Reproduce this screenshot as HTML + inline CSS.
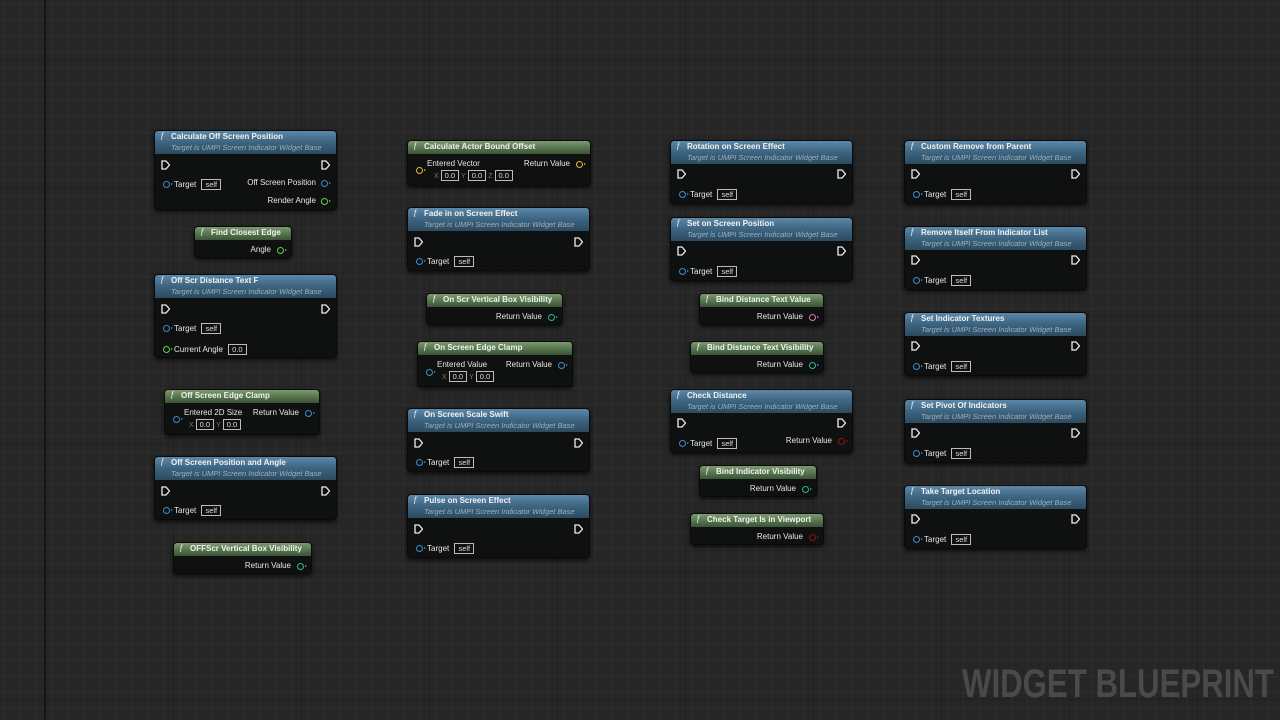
<!DOCTYPE html>
<html><head><meta charset="utf-8"><style>
*{margin:0;padding:0;box-sizing:border-box}
html,body{width:1280px;height:720px;overflow:hidden}
body{position:relative;font-family:"Liberation Sans",sans-serif;
background-color:#262626;
background-image:
linear-gradient(90deg,rgba(0,0,0,0) 0,rgba(0,0,0,0) 44px,#151515 44px,#151515 46px,rgba(0,0,0,0) 46px),
linear-gradient(90deg,rgba(255,255,255,.035) 1px,transparent 1px),
linear-gradient(0deg,rgba(255,255,255,.035) 1px,transparent 1px),
linear-gradient(90deg,rgba(0,0,0,.15) 1px,transparent 1px),
linear-gradient(0deg,rgba(0,0,0,.15) 1px,transparent 1px);
background-size:1280px 720px,16px 16px,16px 16px,128px 128px,128px 128px;
background-position:0 0,3px 5px,3px 5px,45px 0,0 60px}
.n{position:absolute;background:rgba(14,16,15,.95);border-radius:4px;box-shadow:0 2px 4px rgba(0,0,0,.7);border:1px solid #0a0a0a}
.h{position:absolute;left:0;right:0;top:0;border-radius:3px 3px 0 0;padding-left:6px}
.hb{height:23px;background:linear-gradient(180deg,#5c87a8 0%,#3c6480 50%,#2c4a5e 100%)}
.hg{height:13px;background:linear-gradient(180deg,#7d9a70 0%,#51704a 60%,#3c5436 100%)}
.t{position:absolute;top:1px;left:16px;font-size:8px;font-weight:bold;color:#f2f2f2;white-space:nowrap}
.f{position:absolute;top:0px;left:6px;font-size:8px;font-style:italic;font-family:"Liberation Serif",serif;color:#fff}
.s{position:absolute;top:12px;left:16px;font-size:7.5px;font-style:italic;color:#9ab0c0;white-space:nowrap}
.l{position:absolute;font-size:8px;color:#e6e6e6;white-space:nowrap}
.bx{display:inline-block;border:1px solid #bbb;padding:0 3px;font-size:7.5px;color:#ddd;line-height:9px;margin-left:3px}
.ax{color:#777;font-size:7px;margin:0 2px}
.p{position:absolute;width:7px;height:7px;border-radius:50%;border:1.6px solid #3a8fd0}
.p:after{content:"";position:absolute;right:-4px;top:1px;border-left:2px solid currentColor;border-top:1.2px solid transparent;border-bottom:1.2px solid transparent}
.ex{position:absolute;width:9px;height:10px}
.wm{position:absolute;left:962px;top:664px;font-size:40px;line-height:40px;font-weight:bold;color:#4a4a4a;white-space:nowrap;transform:scaleX(.78);transform-origin:left}
</style></head><body>
<svg width="0" height="0" style="position:absolute"><defs><path id="e" d="M1 1h4l3.5 4-3.5 4H1z" fill="none" stroke="#eee" stroke-width="1.3"/></defs></svg>

<!-- Column 1 -->
<div class="n" style="left:154px;top:130px;width:183px;height:80px">
<div class="h hb"><span class="f">f</span><span class="t">Calculate Off Screen Position</span><span class="s">Target is UMPI Screen Indicator Widget Base</span></div>
<svg class="ex" style="left:6px;top:29px"><use href="#e"/></svg><svg class="ex" style="left:166px;top:29px"><use href="#e"/></svg>
<span class="p" style="left:8px;top:50px;color:#3a8fd0"></span><span class="l" style="left:19px;top:48px">Target <span class="bx">self</span></span>
<span class="l" style="right:20px;top:47px">Off Screen Position</span><span class="p" style="left:166px;top:49px;color:#3a8fd0"></span>
<span class="l" style="right:20px;top:65px">Render Angle</span><span class="p" style="left:166px;top:67px;border-color:#5bd34a;color:#5bd34a"></span>
</div>
<div class="n" style="left:194px;top:226px;width:98px;height:32px">
<div class="h hg"><span class="f">f</span><span class="t">Find Closest Edge</span></div>
<span class="l" style="right:20px;top:18px">Angle</span><span class="p" style="left:82px;top:20px;border-color:#5bd34a;color:#5bd34a"></span>
</div>
<div class="n" style="left:154px;top:274px;width:183px;height:84px">
<div class="h hb"><span class="f">f</span><span class="t">Off Scr Distance Text F</span><span class="s">Target is UMPI Screen Indicator Widget Base</span></div>
<svg class="ex" style="left:6px;top:29px"><use href="#e"/></svg><svg class="ex" style="left:166px;top:29px"><use href="#e"/></svg>
<span class="p" style="left:8px;top:50px;color:#3a8fd0"></span><span class="l" style="left:19px;top:48px">Target <span class="bx">self</span></span>
<span class="p" style="left:8px;top:71px;border-color:#5bd34a;color:#5bd34a"></span><span class="l" style="left:19px;top:69px">Current Angle <span class="bx">0.0</span></span>
</div>
<div class="n" style="left:164px;top:389px;width:156px;height:46px">
<div class="h hg"><span class="f">f</span><span class="t">Off Screen Edge Clamp</span></div>
<span class="p" style="left:8px;top:26px;color:#3a8fd0"></span>
<span class="l" style="left:19px;top:18px">Entered 2D Size</span>
<span class="l" style="left:22px;top:29px"><span class="ax">X</span><span class="bx" style="margin:0">0.0</span><span class="ax">Y</span><span class="bx" style="margin:0">0.0</span></span>
<span class="l" style="right:20px;top:18px">Return Value</span><span class="p" style="left:140px;top:20px;color:#3a8fd0"></span>
</div>
<div class="n" style="left:154px;top:456px;width:183px;height:64px">
<div class="h hb"><span class="f">f</span><span class="t">Off Screen Position and Angle</span><span class="s">Target is UMPI Screen Indicator Widget Base</span></div>
<svg class="ex" style="left:6px;top:29px"><use href="#e"/></svg><svg class="ex" style="left:166px;top:29px"><use href="#e"/></svg>
<span class="p" style="left:8px;top:50px;color:#3a8fd0"></span><span class="l" style="left:19px;top:48px">Target <span class="bx">self</span></span>
</div>
<div class="n" style="left:173px;top:542px;width:139px;height:32px">
<div class="h hg"><span class="f">f</span><span class="t">OFFScr Vertical Box Visibility</span></div>
<span class="l" style="right:20px;top:18px">Return Value</span><span class="p" style="left:123px;top:20px;border-color:#2ab89a;color:#2ab89a"></span>
</div>

<!-- Column 2 -->
<div class="n" style="left:407px;top:140px;width:184px;height:46px">
<div class="h hg"><span class="f">f</span><span class="t">Calculate Actor Bound Offset</span></div>
<span class="p" style="left:8px;top:26px;border-color:#e0b830;color:#e0b830"></span>
<span class="l" style="left:19px;top:18px">Entered Vector</span>
<span class="l" style="left:24px;top:29px"><span class="ax">X</span><span class="bx" style="margin:0">0.0</span><span class="ax">Y</span><span class="bx" style="margin:0">0.0</span><span class="ax">Z</span><span class="bx" style="margin:0">0.0</span></span>
<span class="l" style="right:20px;top:18px">Return Value</span><span class="p" style="left:168px;top:20px;border-color:#e0b830;color:#e0b830"></span>
</div>
<div class="n" style="left:407px;top:207px;width:183px;height:64px">
<div class="h hb"><span class="f">f</span><span class="t">Fade in on Screen Effect</span><span class="s">Target is UMPI Screen Indicator Widget Base</span></div>
<svg class="ex" style="left:6px;top:29px"><use href="#e"/></svg><svg class="ex" style="left:166px;top:29px"><use href="#e"/></svg>
<span class="p" style="left:8px;top:50px;color:#3a8fd0"></span><span class="l" style="left:19px;top:48px">Target <span class="bx">self</span></span>
</div>
<div class="n" style="left:426px;top:293px;width:137px;height:32px">
<div class="h hg"><span class="f">f</span><span class="t">On Scr Vertical Box Visibility</span></div>
<span class="l" style="right:20px;top:18px">Return Value</span><span class="p" style="left:121px;top:20px;border-color:#2ab89a;color:#2ab89a"></span>
</div>
<div class="n" style="left:417px;top:341px;width:156px;height:46px">
<div class="h hg"><span class="f">f</span><span class="t">On Screen Edge Clamp</span></div>
<span class="p" style="left:8px;top:27px;color:#3a8fd0"></span>
<span class="l" style="left:19px;top:18px">Entered Value</span>
<span class="l" style="left:22px;top:29px"><span class="ax">X</span><span class="bx" style="margin:0">0.0</span><span class="ax">Y</span><span class="bx" style="margin:0">0.0</span></span>
<span class="l" style="right:20px;top:18px">Return Value</span><span class="p" style="left:140px;top:20px;color:#3a8fd0"></span>
</div>
<div class="n" style="left:407px;top:408px;width:183px;height:64px">
<div class="h hb"><span class="f">f</span><span class="t">On Screen Scale Swift</span><span class="s">Target is UMPI Screen Indicator Widget Base</span></div>
<svg class="ex" style="left:6px;top:29px"><use href="#e"/></svg><svg class="ex" style="left:166px;top:29px"><use href="#e"/></svg>
<span class="p" style="left:8px;top:50px;color:#3a8fd0"></span><span class="l" style="left:19px;top:48px">Target <span class="bx">self</span></span>
</div>
<div class="n" style="left:407px;top:494px;width:183px;height:64px">
<div class="h hb"><span class="f">f</span><span class="t">Pulse on Screen Effect</span><span class="s">Target is UMPI Screen Indicator Widget Base</span></div>
<svg class="ex" style="left:6px;top:29px"><use href="#e"/></svg><svg class="ex" style="left:166px;top:29px"><use href="#e"/></svg>
<span class="p" style="left:8px;top:50px;color:#3a8fd0"></span><span class="l" style="left:19px;top:48px">Target <span class="bx">self</span></span>
</div>

<!-- Column 3 -->
<div class="n" style="left:670px;top:140px;width:183px;height:64px">
<div class="h hb"><span class="f">f</span><span class="t">Rotation on Screen Effect</span><span class="s">Target is UMPI Screen Indicator Widget Base</span></div>
<svg class="ex" style="left:6px;top:28px"><use href="#e"/></svg><svg class="ex" style="left:166px;top:28px"><use href="#e"/></svg>
<span class="p" style="left:8px;top:50px;color:#3a8fd0"></span><span class="l" style="left:19px;top:48px">Target <span class="bx">self</span></span>
</div>
<div class="n" style="left:670px;top:217px;width:183px;height:64px">
<div class="h hb"><span class="f">f</span><span class="t">Set on Screen Position</span><span class="s">Target is UMPI Screen Indicator Widget Base</span></div>
<svg class="ex" style="left:6px;top:28px"><use href="#e"/></svg><svg class="ex" style="left:166px;top:28px"><use href="#e"/></svg>
<span class="p" style="left:8px;top:50px;color:#3a8fd0"></span><span class="l" style="left:19px;top:48px">Target <span class="bx">self</span></span>
</div>
<div class="n" style="left:699px;top:293px;width:125px;height:32px">
<div class="h hg"><span class="f">f</span><span class="t">Bind Distance Text Value</span></div>
<span class="l" style="right:20px;top:18px">Return Value</span><span class="p" style="left:109px;top:20px;border-color:#e07aa8;color:#e07aa8"></span>
</div>
<div class="n" style="left:690px;top:341px;width:134px;height:32px">
<div class="h hg"><span class="f">f</span><span class="t">Bind Distance Text Visibility</span></div>
<span class="l" style="right:20px;top:18px">Return Value</span><span class="p" style="left:118px;top:20px;border-color:#2ab89a;color:#2ab89a"></span>
</div>
<div class="n" style="left:670px;top:389px;width:183px;height:64px">
<div class="h hb"><span class="f">f</span><span class="t">Check Distance</span><span class="s">Target is UMPI Screen Indicator Widget Base</span></div>
<svg class="ex" style="left:6px;top:28px"><use href="#e"/></svg><svg class="ex" style="left:166px;top:28px"><use href="#e"/></svg>
<span class="p" style="left:8px;top:50px;color:#3a8fd0"></span><span class="l" style="left:19px;top:48px">Target <span class="bx">self</span></span>
<span class="l" style="right:20px;top:46px">Return Value</span><span class="p" style="left:167px;top:48px;border-color:#9a1010;color:#9a1010"></span>
</div>
<div class="n" style="left:699px;top:465px;width:118px;height:32px">
<div class="h hg"><span class="f">f</span><span class="t">Bind Indicator Visibility</span></div>
<span class="l" style="right:20px;top:18px">Return Value</span><span class="p" style="left:102px;top:20px;border-color:#2ab89a;color:#2ab89a"></span>
</div>
<div class="n" style="left:690px;top:513px;width:134px;height:32px">
<div class="h hg"><span class="f">f</span><span class="t">Check Target Is in Viewport</span></div>
<span class="l" style="right:20px;top:18px">Return Value</span><span class="p" style="left:118px;top:20px;border-color:#9a1010;color:#9a1010"></span>
</div>

<!-- Column 4 -->
<div class="n" style="left:904px;top:140px;width:183px;height:64px">
<div class="h hb"><span class="f">f</span><span class="t">Custom Remove from Parent</span><span class="s">Target is UMPI Screen Indicator Widget Base</span></div>
<svg class="ex" style="left:6px;top:28px"><use href="#e"/></svg><svg class="ex" style="left:166px;top:28px"><use href="#e"/></svg>
<span class="p" style="left:8px;top:50px;color:#3a8fd0"></span><span class="l" style="left:19px;top:48px">Target <span class="bx">self</span></span>
</div>
<div class="n" style="left:904px;top:226px;width:183px;height:64px">
<div class="h hb"><span class="f">f</span><span class="t">Remove Itself From Indicator List</span><span class="s">Target is UMPI Screen Indicator Widget Base</span></div>
<svg class="ex" style="left:6px;top:28px"><use href="#e"/></svg><svg class="ex" style="left:166px;top:28px"><use href="#e"/></svg>
<span class="p" style="left:8px;top:50px;color:#3a8fd0"></span><span class="l" style="left:19px;top:48px">Target <span class="bx">self</span></span>
</div>
<div class="n" style="left:904px;top:312px;width:183px;height:64px">
<div class="h hb"><span class="f">f</span><span class="t">Set Indicator Textures</span><span class="s">Target is UMPI Screen Indicator Widget Base</span></div>
<svg class="ex" style="left:6px;top:28px"><use href="#e"/></svg><svg class="ex" style="left:166px;top:28px"><use href="#e"/></svg>
<span class="p" style="left:8px;top:50px;color:#3a8fd0"></span><span class="l" style="left:19px;top:48px">Target <span class="bx">self</span></span>
</div>
<div class="n" style="left:904px;top:399px;width:183px;height:64px">
<div class="h hb"><span class="f">f</span><span class="t">Set Pivot Of Indicators</span><span class="s">Target is UMPI Screen Indicator Widget Base</span></div>
<svg class="ex" style="left:6px;top:28px"><use href="#e"/></svg><svg class="ex" style="left:166px;top:28px"><use href="#e"/></svg>
<span class="p" style="left:8px;top:50px;color:#3a8fd0"></span><span class="l" style="left:19px;top:48px">Target <span class="bx">self</span></span>
</div>
<div class="n" style="left:904px;top:485px;width:183px;height:64px">
<div class="h hb"><span class="f">f</span><span class="t">Take Target Location</span><span class="s">Target is UMPI Screen Indicator Widget Base</span></div>
<svg class="ex" style="left:6px;top:28px"><use href="#e"/></svg><svg class="ex" style="left:166px;top:28px"><use href="#e"/></svg>
<span class="p" style="left:8px;top:50px;color:#3a8fd0"></span><span class="l" style="left:19px;top:48px">Target <span class="bx">self</span></span>
</div>

<div class="wm">WIDGET BLUEPRINT</div>
</body></html>
